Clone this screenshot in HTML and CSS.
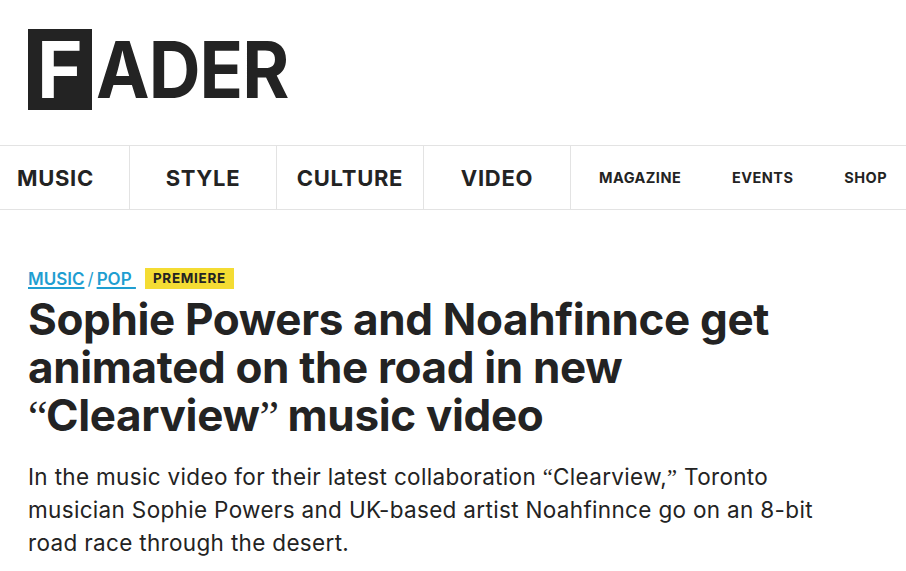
FILE: index.html
```html
<!DOCTYPE html>
<html>
<head>
  <title>Sophie Powers and Noahfinnce get animated on the road in new "Clearview" music video</title>
  <link rel="stylesheet" href="styles.css">
</head>
<body>
  <header class="masthead">
    <a class="logo" href="#">
      <span class="logo-box">F</span>
      <span class="logo-rest">ADER</span>
    </a>
  </header>

  <nav class="nav">
    <a class="nav-main nav-first" href="#">MUSIC</a>
    <a class="nav-main" href="#">STYLE</a>
    <a class="nav-main" href="#">CULTURE</a>
    <a class="nav-main" href="#">VIDEO</a>
    <div class="nav-sub">
      <a href="#">MAGAZINE</a>
      <a href="#">EVENTS</a>
      <a href="#">SHOP</a>
    </div>
  </nav>

  <article class="article">
    <div class="meta">
      <a class="crumb" href="#">MUSIC</a>
      <span class="slash">/</span>
      <a class="crumb" href="#">POP&nbsp;</a>
      <span class="badge">PREMIERE</span>
    </div>
    <h1>Sophie Powers and Noahfinnce get animated on the road in new <span class="quote">“</span>Clearview<span class="quote">”</span> music video</h1>
    <p class="dek">In the music video for their latest collaboration <span class="quote">“</span>Clearview,<span class="quote">”</span> Toronto<br>musician Sophie Powers and UK-based artist Noahfinnce go on an 8-bit road race through the desert.</p>
  </article>
</body>
</html>
```

FILE: styles.css
```css
body {
  font-family: Inter, "Liberation Sans", sans-serif;
  margin: 0;
  padding: 0;
  color: #232323;
  background-color: #ffffff;
  overflow: hidden;
}
a {
  color: inherit;
  text-decoration: none;
}

/* Logo */
.masthead {
  height: 145px;
  padding: 29px 0 0 28px;
  box-sizing: border-box;
}
.logo {
  display: flex;
  align-items: center;
  width: 300px;
  height: 81px;
  font-weight: 700;
  font-size: 78px;
  line-height: 81px;
}
.logo-box {
  width: 64px;
  height: 81px;
  background-color: #232323;
  color: #ffffff;
  text-align: center;
  flex-shrink: 0;
}
.logo-rest {
  margin-left: 4px;
  letter-spacing: -1px;
  transform: scaleX(0.92); /* wordmark is narrower than Inter */
  transform-origin: left center;
}

/* Nav */
.nav {
  display: flex;
  height: 65px;
  border-top: 1px solid #e3e3e3;
  border-bottom: 1px solid #e3e3e3;
  box-sizing: border-box;
}
.nav-main {
  display: flex;
  align-items: center;
  justify-content: center;
  width: 147px;
  box-sizing: border-box;
  border-right: 1px solid #e3e3e3;
  font-size: 22px;
  font-weight: 700;
  letter-spacing: 0.7px;
}
.nav-first {
  width: 130px;
  justify-content: flex-start;
  padding-left: 17px;
}
.nav-sub {
  display: flex;
  flex: 1;
  align-items: center;
  justify-content: space-between;
  padding: 0 19px 0 28px;
  font-size: 14.5px;
  font-weight: 700;
  letter-spacing: 0.45px;
}

/* Article */
.article {
  padding: 58px 28px 0;
}
.meta {
  display: flex;
  align-items: center;
  height: 21px;
  font-size: 17px;
  font-weight: 600;
}
.crumb {
  color: #1f9ed1;
  text-decoration: underline;
  text-decoration-thickness: 2px;
  text-underline-offset: 2px;
}
.slash {
  color: #1f9ed1;
  margin: 0 3px 0 3px;
  font-weight: 400;
}
.badge {
  margin-left: 9px;
  padding: 0 8px;
  height: 21px;
  line-height: 21px;
  background-color: #f4dc33;
  font-size: 13.5px;
  font-weight: 700;
  letter-spacing: 0.7px;
}
h1 {
  margin: 6px 0 0;
  font-size: 44px;
  line-height: 48px;
  font-weight: 700;
  letter-spacing: -0.35px;
}
h1 .quote {
  letter-spacing: -1.5px;
}
.quote {
  font-family: "Liberation Serif", serif;
  font-weight: 400;
}
.dek {
  margin: 20px 0 0;
  max-width: 800px;
  font-size: 22.5px;
  line-height: 32.4px;
  font-weight: 400;
  letter-spacing: 0.33px;
}
```
